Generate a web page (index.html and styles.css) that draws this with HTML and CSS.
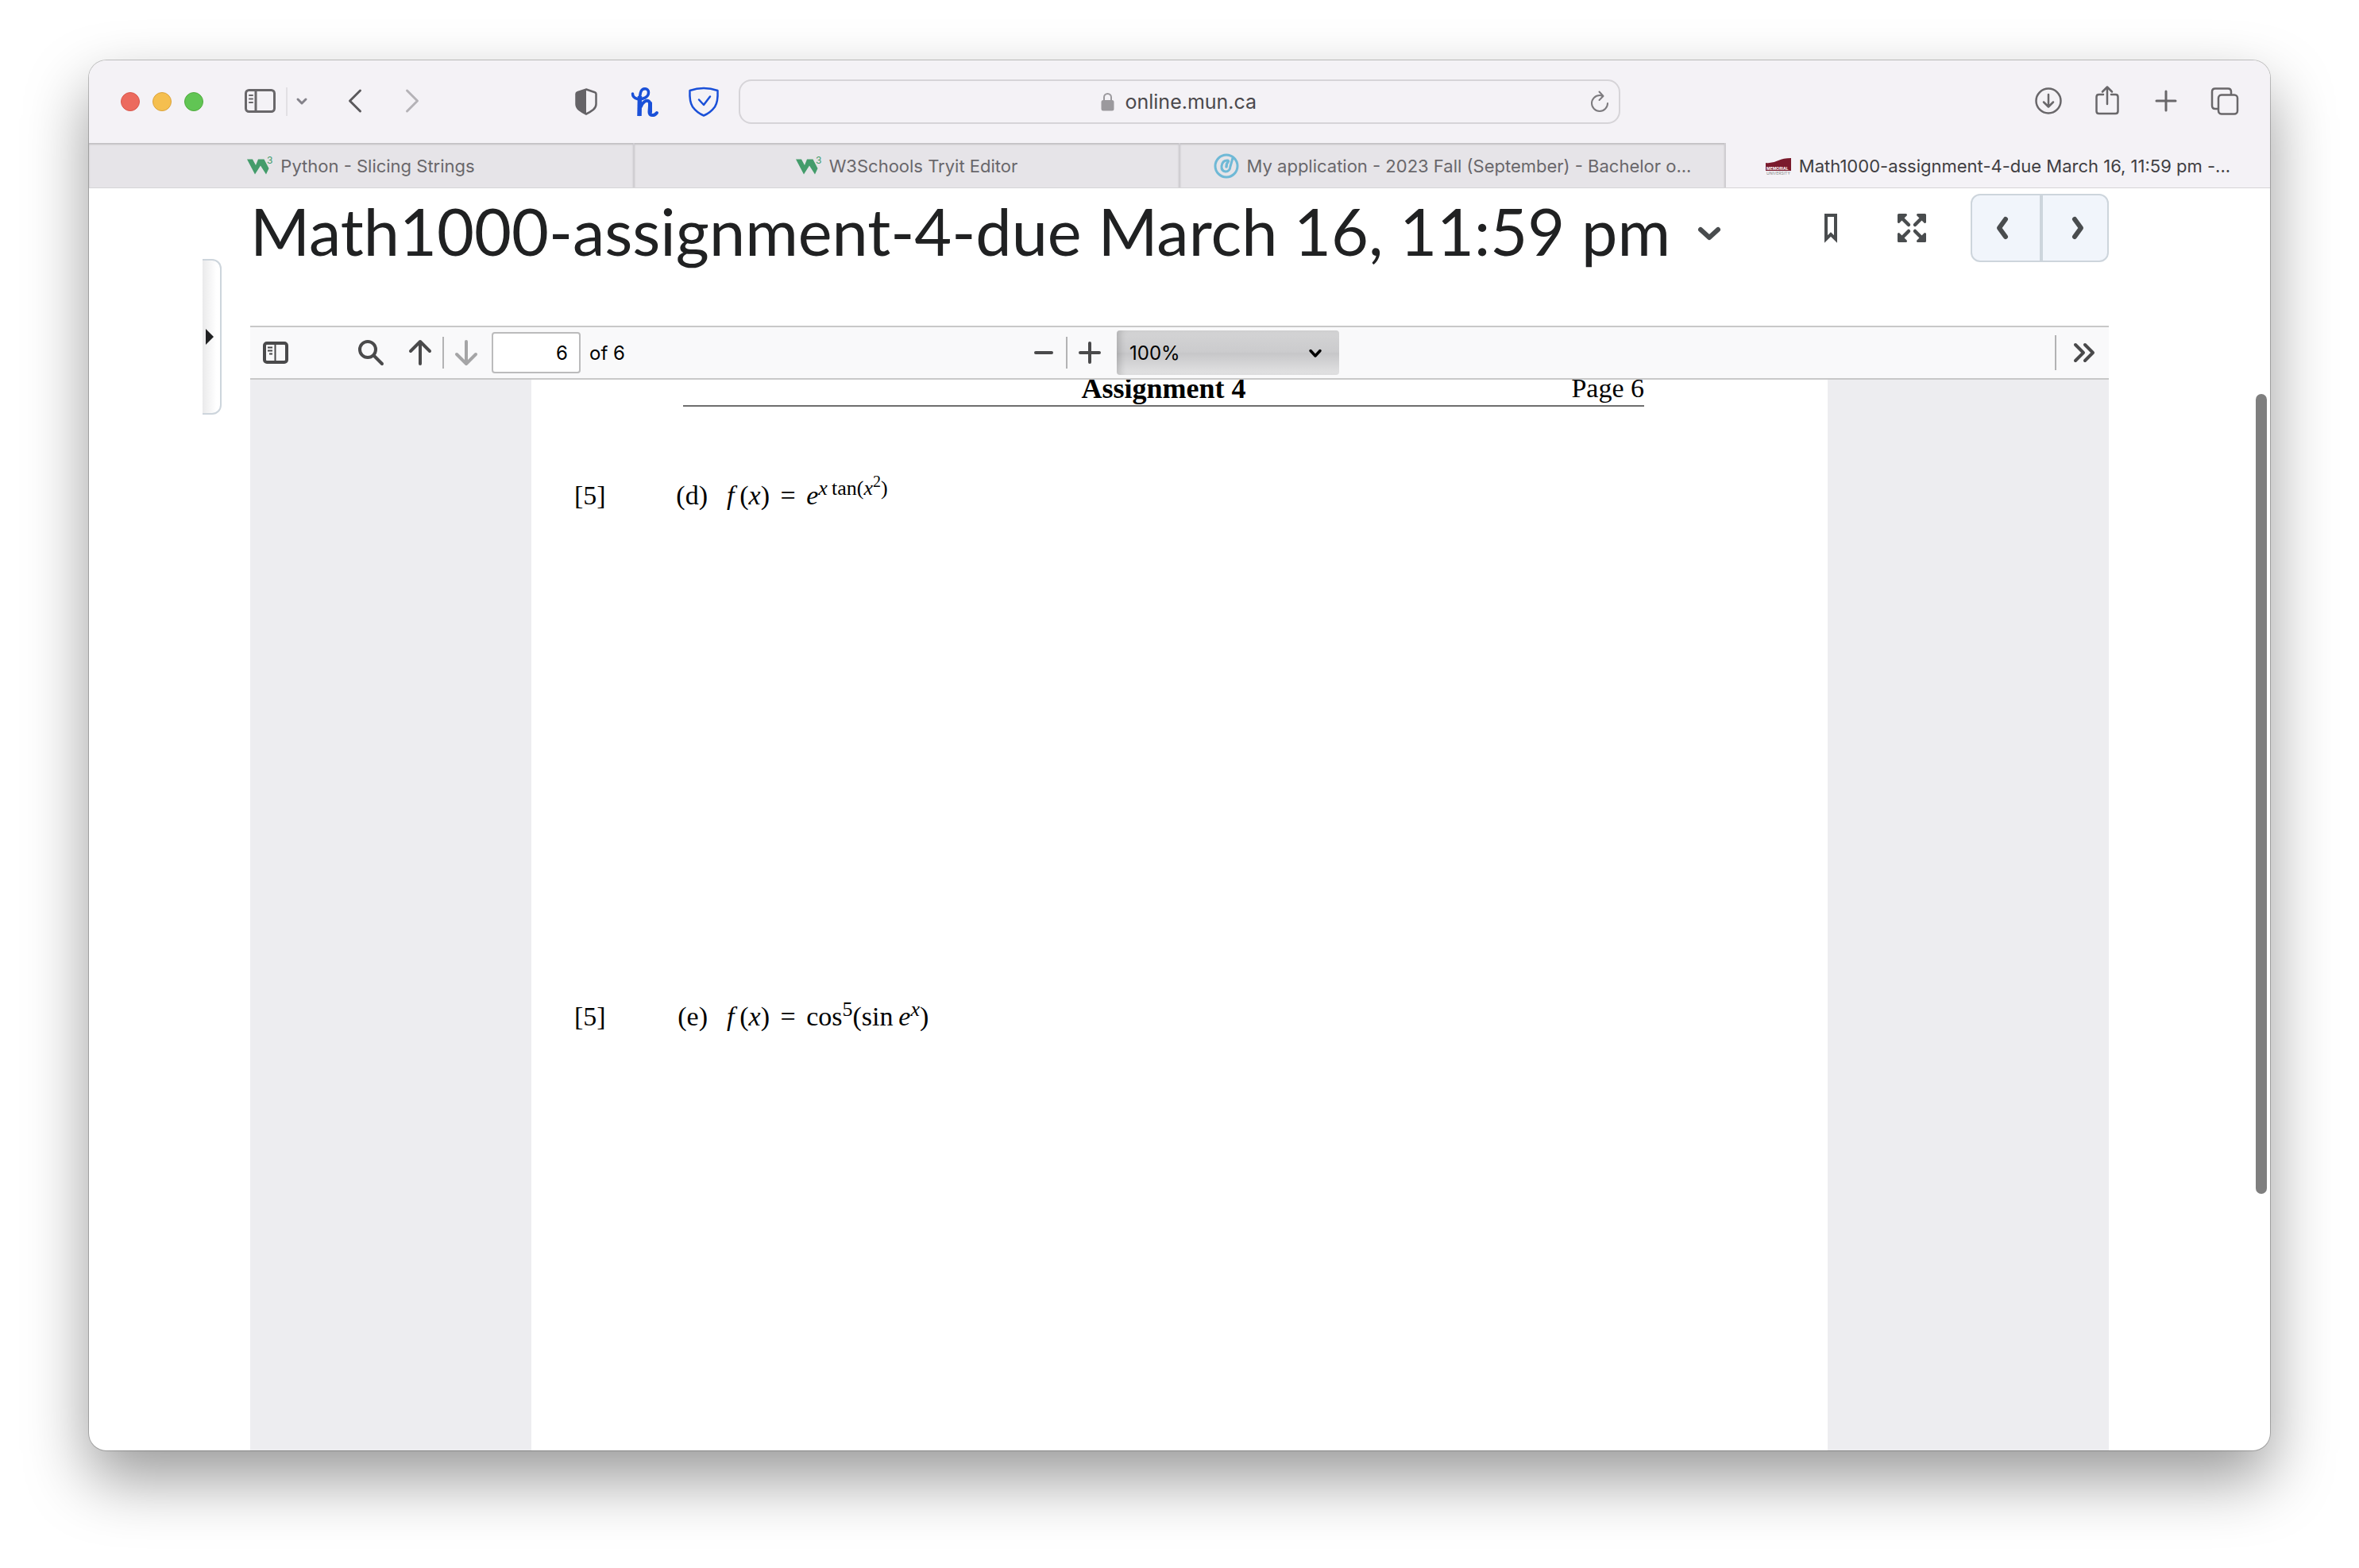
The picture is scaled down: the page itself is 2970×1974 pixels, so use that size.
FILE: index.html
```html
<!DOCTYPE html>
<html lang="en">
<head>
    <meta charset="UTF-8">
    <meta name="viewport" content="width=device-width, initial-scale=1.0">
    <title>Math1000-assignment-4-due March 16, 11:59 pm</title>
    <link rel="stylesheet" href="styles.css">
</head>
<body>
    <div class="window">
        <header class="toolbar">
            <div class="toolbar-left">
                <div class="lights">
                    <button class="light red" aria-label="Close"></button>
                    <button class="light yellow" aria-label="Minimize"></button>
                    <button class="light green" aria-label="Zoom"></button>
                </div>
                <button class="icon-btn sidebar-btn" aria-label="Sidebar">
                    <svg width="40" height="32" viewBox="0 0 40 32" fill="none" stroke="#69676a" stroke-width="3"><rect x="1.500" y="1.500" width="36" height="27" rx="4"/><path d="M14 1v28"/><path d="M6 8h4M6 12.500h4M6 17h4" stroke-width="2" stroke-linecap="round"/></svg>
                </button>
                <span class="toolbar-divider"></span>
                <button class="mini-btn" aria-label="Tab groups">
                    <svg width="16" height="12" viewBox="0 0 16 12" fill="none" stroke="#84828a" stroke-width="3" stroke-linecap="round" stroke-linejoin="round"><path d="M3 3l5 5 5-5"/></svg>
                </button>
                <div class="nav">
                    <button class="icon-btn" aria-label="Back">
                        <svg width="20" height="32" viewBox="0 0 20 32" fill="none" stroke="#5b595c" stroke-width="3" stroke-linecap="round" stroke-linejoin="round"><path d="M16.500 2L3.500 15l13 13"/></svg>
                    </button>
                    <button class="icon-btn" aria-label="Forward" disabled>
                        <svg width="20" height="32" viewBox="0 0 20 32" fill="none" stroke="#b5b3b7" stroke-width="3" stroke-linecap="round" stroke-linejoin="round"><path d="M3.500 2l13 13-13 13"/></svg>
                    </button>
                </div>
                <div class="extensions">
                    <button class="icon-btn" aria-label="Privacy report">
                        <svg width="28" height="34" viewBox="0 0 28 34"><path d="M14 1.500L25 5.200q1.500.5 1.500 2V20q0 4-3.500 7-4 3.200-9 5.500-5-2.300-9-5.500-3.500-3-3.500-7V7.200q0-1.500 1.500-2z" fill="none" stroke="#656367" stroke-width="2.500"/><path d="M14 1.500v31Q9 30.200 5 27q-3.500-3-3.500-7V7.200q0-1.500 1.500-2z" fill="#656367"/></svg>
                    </button>
                    <button class="icon-btn" aria-label="Honey">
                        <svg width="36" height="38" viewBox="0 0 36 38" fill="none" stroke="#1a50d8" stroke-linecap="round" stroke-linejoin="round"><path d="M2.500 9q0 5 6 6.500c7 1 14-2 14-8 0-6-8-6.500-10 0-.8 3-1.500 8-1.500 12v16" stroke-width="3.500"/><path d="M11.500 12L11 37" stroke-width="5.500" stroke-linecap="butt"/><path d="M13 25c2-5 6-8 9-7 3.500 1 1.500 9 1.500 14 0 5 6 5.500 9.500 1" stroke-width="4"/><path d="M24.500 21v11" stroke-width="5"/></svg>
                    </button>
                    <button class="icon-btn" aria-label="Link checker">
                        <svg width="38" height="38" viewBox="0 0 38 38" fill="none" stroke="#1a50d8" stroke-width="2.500" stroke-linecap="round" stroke-linejoin="round"><path d="M1.500 5Q19-1 36.500 5q.7 14-3.500 20.500Q27.500 33 19 36.500 10.500 33 5 25.500.8 19 1.500 5z"/><path d="M13 16.500l6 6.500 8-10.500"/></svg>
                    </button>
                </div>
            </div>
            <form class="address">
                <label class="address-main" for="url">
                    <svg width="17" height="24" viewBox="0 0 17 24"><path d="M4 12V6.500a4.500 4.500 0 0 1 9 0V12" fill="none" stroke="#9b999d" stroke-width="2"/><rect x="0.500" y="10" width="16" height="13.500" rx="2.500" fill="#9b999d"/></svg>
                    <input id="url" type="text" value="online.mun.ca" aria-label="Address">
                </label>
                <button class="reload" type="button" aria-label="Reload">
                    <svg width="24" height="28" viewBox="0 0 24 28" fill="none" stroke="#7c7a7e" stroke-width="2" stroke-linecap="round" stroke-linejoin="round"><path d="M15.500 7Q13.500 6 12 6a10 10 0 1 0 10 10"/><path d="M11.500 1.500L16.500 7l-5 5"/></svg>
                </button>
            </form>
            <div class="toolbar-right">
                <button class="icon-btn" aria-label="Downloads">
                    <svg width="34" height="34" viewBox="0 0 34 34" fill="none" stroke="#69676a" stroke-width="2.500" stroke-linecap="round" stroke-linejoin="round"><circle cx="17" cy="16" r="15.500"/><path d="M17 8v15M11 17.500l6 6 6-6"/></svg>
                </button>
                <button class="icon-btn" aria-label="Share">
                    <svg width="32" height="40" viewBox="0 0 32 40" fill="none" stroke="#69676a" stroke-width="2.500" stroke-linecap="round" stroke-linejoin="round"><path d="M11 11H5.500Q2.500 11 2.500 14v18q0 3 3 3h21q3 0 3-3V14q0-3-3-3H21"/><path d="M16 23V1.500M10 7.500l6-6 6 6"/></svg>
                </button>
                <button class="icon-btn" aria-label="New tab">
                    <svg width="28" height="28" viewBox="0 0 28 28" fill="none" stroke="#69676a" stroke-width="3" stroke-linecap="round"><path d="M14 1v24M2 13h24"/></svg>
                </button>
                <button class="icon-btn" aria-label="Tab overview">
                    <svg width="36" height="36" viewBox="0 0 36 36" fill="none" stroke="#69676a" stroke-width="2.500" stroke-linejoin="round"><rect x="10" y="9.500" width="24" height="24" rx="4"/><path d="M10 27H6q-4 0-4-4V5.500q0-4 4-4h16q4 0 4 4v4"/></svg>
                </button>
            </div>
        </header>

        <nav class="tabs" role="tablist">
            <button class="tab" role="tab">
                <svg width="32" height="24" viewBox="0 0 32 24"><path d="M0 3.500h7l4 7.500 3-7.500h7.500l6 11.500-3.500 7.500L17 11.500l-7 11z" fill="#449c6b"/><text class="w3" x="25" y="9">3</text></svg>
                <span>Python - Slicing Strings</span>
            </button>
            <button class="tab" role="tab">
                <svg width="32" height="24" viewBox="0 0 32 24"><path d="M0 3.500h7l4 7.500 3-7.500h7.500l6 11.500-3.500 7.500L17 11.500l-7 11z" fill="#449c6b"/><text class="w3" x="25" y="9">3</text></svg>
                <span>W3Schools Tryit Editor</span>
            </button>
            <button class="tab" role="tab">
                <svg width="32" height="32" viewBox="0 0 32 32" fill="none" stroke="#6fb9d6"><circle cx="16" cy="16" r="14" stroke-width="3"/><path d="M18 9q-7-.5-8 7-.5 6.500 5 7 5.500 0 6-6.500L24 6" stroke-width="3" stroke-linecap="round"/><path d="M18.500 10q-2.500 3-2.500 7" stroke-width="3.500" stroke-linecap="round"/></svg>
                <span>My application - 2023 Fall (September) - Bachelor o...</span>
            </button>
            <button class="tab active" role="tab" aria-selected="true">
                <svg width="32" height="22" viewBox="0 0 32 22"><path d="M0 7q8 1 16-3 6-3 16-3v16H0z" fill="#7a1a2c"/><text class="crest light-text" x="1" y="16">MEMORIAL</text><text class="crest" x="1" y="22">UNIVERSITY</text></svg>
                <span>Math1000-assignment-4-due March 16, 11:59 pm -...</span>
            </button>
        </nav>

        <main class="page">
            <button class="drawer-handle" aria-label="Open panel">
                <svg width="10" height="20" viewBox="0 0 10 20"><path d="M0 0l10 10L0 20z" fill="#202122"/></svg>
            </button>
            <section class="content">
                <div class="title-row">
                    <h1>Math1000-assignment-4-due March 16, 11:59 pm</h1>
                    <button class="title-menu" aria-label="Topic actions">
                        <svg width="30" height="18" viewBox="0 0 30 18" fill="none" stroke="#494c4e" stroke-width="6" stroke-linecap="round" stroke-linejoin="round"><path d="M4 4l11 10L26 4"/></svg>
                    </button>
                    <div class="actions">
                        <button class="icon-btn" aria-label="Bookmark">
                            <svg width="16" height="36" viewBox="0 0 16 36"><path d="M2 2h12v30l-6-6-6 6z" fill="none" stroke="#494c4e" stroke-width="4"/></svg>
                        </button>
                        <button class="icon-btn" aria-label="Full screen">
                            <svg width="36" height="36" viewBox="0 0 36 36" fill="#494c4e" stroke="#494c4e"><path d="M5 5l9 9M31 5l-9 9M5 31l9-9M31 31l-9-9" stroke-width="4.500" stroke-linecap="round"/><path d="M1.500 1.500h9l-9 9zM34.500 1.500h-9l9 9zM1.500 34.500h9l-9-9zM34.500 34.500h-9l9-9z" stroke-width="3" stroke-linejoin="round"/></svg>
                        </button>
                        <div class="pager">
                            <button class="prev" aria-label="Previous">
                                <svg width="18" height="30" viewBox="0 0 18 30" fill="none" stroke="#494c4e" stroke-width="6" stroke-linecap="round" stroke-linejoin="round"><path d="M13 4L5 15l8 11"/></svg>
                            </button>
                            <button class="next" aria-label="Next">
                                <svg width="18" height="30" viewBox="0 0 18 30" fill="none" stroke="#494c4e" stroke-width="6" stroke-linecap="round" stroke-linejoin="round"><path d="M5 4l8 11-8 11"/></svg>
                            </button>
                        </div>
                    </div>
                </div>

                <div class="pdf-bar">
                    <div class="pdf-left">
                        <button class="pdf-btn" aria-label="Toggle sidebar">
                            <svg width="32" height="28" viewBox="0 0 32 28" fill="none" stroke="#4a4a4b"><rect x="2" y="2" width="28" height="24" rx="3" stroke-width="4"/><path d="M15.500 3v22M6 7.500h6M6 11.500h6M8 15.500h4" stroke-width="2"/></svg>
                        </button>
                        <button class="pdf-btn find" aria-label="Find">
                            <svg width="32" height="32" viewBox="0 0 32 32" fill="none" stroke="#4a4a4b" stroke-width="4" stroke-linecap="round"><circle cx="12" cy="12" r="10"/><path d="M20 20l10 10"/></svg>
                        </button>
                        <button class="pdf-btn" aria-label="Previous page">
                            <svg width="28" height="32" viewBox="0 0 28 32" fill="none" stroke="#4a4a4b" stroke-width="4" stroke-linecap="round" stroke-linejoin="round"><path d="M14 30V2M2 14L14 2l12 12"/></svg>
                        </button>
                        <span class="pdf-divider"></span>
                        <button class="pdf-btn" aria-label="Next page" disabled>
                            <svg width="28" height="32" viewBox="0 0 28 32" fill="none" stroke="#a5a5a6" stroke-width="4" stroke-linecap="round" stroke-linejoin="round"><path d="M14 2v28M2 18l12 12 12-12"/></svg>
                        </button>
                        <input id="page-number" class="page-number" type="text" value="6">
                        <label for="page-number">of 6</label>
                    </div>
                    <div class="pdf-middle">
                        <button class="pdf-btn" aria-label="Zoom out">
                            <svg width="28" height="28" viewBox="0 0 28 28" fill="none" stroke="#4a4a4b" stroke-width="4" stroke-linecap="round"><path d="M4 14h20"/></svg>
                        </button>
                        <span class="pdf-divider"></span>
                        <button class="pdf-btn" aria-label="Zoom in">
                            <svg width="28" height="28" viewBox="0 0 28 28" fill="none" stroke="#4a4a4b" stroke-width="4" stroke-linecap="round"><path d="M2 14h24M14 2v24"/></svg>
                        </button>
                        <div class="zoom-box">
                            <select aria-label="Zoom">
                                <option>100%</option>
                            </select>
                            <svg width="18" height="12" viewBox="0 0 18 12" fill="none" stroke="#000" stroke-width="3.500" stroke-linecap="round" stroke-linejoin="round"><path d="M3 2.500L9 9l6-6.500"/></svg>
                        </div>
                    </div>
                    <div class="pdf-right">
                        <span class="pdf-divider tall"></span>
                        <button class="pdf-btn" aria-label="Tools">
                            <svg width="28" height="24" viewBox="0 0 28 24" fill="none" stroke="#4a4a4b" stroke-width="4" stroke-linecap="round" stroke-linejoin="round"><path d="M3 2l10 10L3 22M15 2l10 10-10 10"/></svg>
                        </button>
                    </div>
                </div>

                <div class="viewer">
                    <article class="sheet">
                        <div class="sheet-head">
                            <span></span>
                            <b>Assignment 4</b>
                            <span class="sheet-page">Page 6</span>
                        </div>
                        <div class="question">
                            <span>[5]</span>
                            <span class="part">(d)</span>
                            <span class="formula"><i>f</i>&thinsp;(<i>x</i>) <span class="eq">=</span> <i>e</i><sup><i>x</i>&thinsp;tan(<i>x</i><sup>2</sup>)</sup></span>
                        </div>
                        <div class="question">
                            <span>[5]</span>
                            <span class="part">(e)</span>
                            <span class="formula"><i>f</i>&thinsp;(<i>x</i>) <span class="eq">=</span> cos<sup>5</sup>(sin&thinsp;<i>e</i><sup><i>x</i></sup>)</span>
                        </div>
                    </article>
                </div>
            </section>
            <div class="scrollbar"></div>
        </main>
    </div>
</body>
</html>
```
FILE: styles.css
```css
* {
    box-sizing: border-box;
}

body {
    display: flex;
    min-height: 100vh;
    margin: 0;
    padding: 76px 112px 148px;
    background: #fff;
    font-family: Inter, "Liberation Sans", sans-serif;
    color: #202122;
}

button {
    display: flex;
    align-items: center;
    justify-content: center;
    padding: 0;
    border: none;
    background: none;
    font-family: inherit;
}

input, select {
    font-family: inherit;
}

svg {
    display: block;
    flex: none;
    overflow: visible;
}

.window {
    display: flex;
    flex-direction: column;
    flex: 1;
    min-width: 0;
    overflow: hidden;
    border-radius: 22px;
    background: #fff;
    box-shadow: 0 0 0 1px rgba(0, 0, 0, 0.22), 0 36px 80px rgba(0, 0, 0, 0.4);
}

/* browser toolbar */
.toolbar {
    display: grid;
    grid-template-columns: 1fr minmax(0, 1110px) 1fr;
    align-items: center;
    height: 104px;
    background: #f4f2f6;
}

.toolbar-left, .toolbar-right, .lights, .nav, .extensions {
    display: flex;
    align-items: center;
}

.toolbar-left {
    padding: 0 24px 0 40px;
}

.toolbar-right {
    justify-content: flex-end;
    gap: 34px;
    padding-right: 37px;
}

.lights {
    gap: 16px;
}

.light {
    width: 24px;
    height: 24px;
    border: 1px solid #d9574c;
    border-radius: 50%;
    background: #ec6a5e;
}

.yellow {
    border-color: #dba33d;
    background: #f5bf4f;
}

.green {
    border-color: #50ab3e;
    background: #61c554;
}

.icon-btn {
    width: 40px;
    height: 40px;
}

.sidebar-btn {
    margin-left: 52px;
}

.toolbar-divider {
    width: 2px;
    height: 36px;
    margin: 0 10px 0 12px;
    background: #e2e0e4;
}

.nav {
    gap: 32px;
    margin-left: 39px;
}

.extensions {
    gap: 34px;
    margin-left: auto;
}

.address {
    display: grid;
    grid-template-columns: 1fr auto 1fr;
    align-items: center;
    height: 56px;
    padding: 0 12px;
    border: 2px solid #d6d4d8;
    border-radius: 16px;
}

.address-main {
    display: flex;
    grid-column: 2;
    align-items: center;
    gap: 14px;
}

.address input {
    width: 168px;
    padding: 0;
    border: none;
    background: none;
    font-size: 25px;
    color: #4b494d;
}

.reload {
    justify-self: end;
}

/* tab strip */
.tabs {
    display: flex;
    height: 57px;
    border-bottom: 1px solid #d6d5d7;
    background: #f4f2f6;
}

.tab {
    flex: 1;
    gap: 10px;
    min-width: 0;
    padding-top: 2px;
    border-right: 2px solid #d0ced2;
    background: #e6e4e8;
    box-shadow: inset 0 2px 2px rgba(0, 0, 0, 0.16);
    font-size: 22px;
    color: #69676b;
    white-space: nowrap;
}

.tab.active {
    border-right: none;
    background: none;
    box-shadow: none;
    color: #403e42;
}

.w3 {
    font-size: 12px;
    fill: #449c6b;
}

.crest {
    font-size: 5px;
    fill: #8a8a8c;
}

.light-text {
    font-weight: 700;
    fill: #fff;
}

/* page body */
.page {
    position: relative;
    display: flex;
    flex: 1;
    gap: 36px;
    padding: 0 203px 0 143px;
}

.drawer-handle {
    width: 24px;
    height: 196px;
    margin-top: 89px;
    padding-right: 4px;
    border: 2px solid #cdd5dc;
    border-left: none;
    border-radius: 0 12px 12px 0;
    background: linear-gradient(to right, #eaeaeb, #fff 80%);
}

.content {
    display: flex;
    flex: 1;
    flex-direction: column;
    min-width: 0;
}

.title-row {
    display: flex;
    align-items: flex-start;
    height: 173px;
    padding-top: 6px;
}

h1 {
    margin: 0;
    font: 400 81px/96px Lato, sans-serif;
    white-space: nowrap;
}

.title-menu {
    width: 30px;
    height: 96px;
    margin-left: 34px;
    padding-top: 6px;
}

.actions {
    display: flex;
    align-items: center;
    gap: 46px;
    height: 88px;
    margin-left: auto;
}

.actions .icon-btn {
    width: 56px;
}

.pager {
    display: flex;
    height: 86px;
    border: 2px solid #cdd5dc;
    border-radius: 12px;
    background: #f1f5fb;
}

.pager button {
    width: 85px;
}

.pager .prev {
    padding-right: 10px;
}

.pager .next {
    padding-left: 6px;
    border-left: 4px solid #cdd5dc;
}

/* pdf toolbar */
.pdf-bar {
    display: grid;
    grid-template-columns: 1fr auto 1fr;
    align-items: center;
    height: 68px;
    border: solid #c8c8c8;
    border-width: 2px 0;
    background: #f9f9fa;
    font-size: 24px;
    color: #000;
}

.pdf-left, .pdf-middle, .pdf-right {
    display: flex;
    align-items: center;
}

.pdf-left {
    padding-left: 16px;
}

.pdf-middle {
    padding-left: 14px;
}

.pdf-right {
    justify-content: flex-end;
    gap: 7px;
    padding-right: 15px;
}

.pdf-btn {
    width: 32px;
    height: 56px;
}

.find {
    margin: 0 30px 0 88px;
}

.pdf-divider {
    width: 2px;
    height: 40px;
    margin: 0 12px;
    background: #b3b3b4;
}

.pdf-divider.tall {
    height: 44px;
}

.page-number {
    width: 112px;
    height: 52px;
    margin: 0 11px 0 16px;
    padding: 0 14px;
    border: 2px solid #bbbbbc;
    border-radius: 4px;
    font-size: 24px;
    text-align: right;
}

.zoom-box {
    position: relative;
    margin-left: 18px;
}

.zoom-box select {
    width: 280px;
    height: 56px;
    padding: 0 16px;
    appearance: none;
    border: none;
    border-radius: 4px;
    background: linear-gradient(#d4d4d5, #cbcbcd 50%, #c6c6c8 50%, #e3e3e4);
    box-shadow: inset 8px 0 8px -4px rgba(0, 0, 0, 0.16);
    font-size: 24px;
    color: #000;
}

.zoom-box svg {
    position: absolute;
    top: 23px;
    right: 21px;
    pointer-events: none;
}

/* pdf sheet */
.viewer {
    flex: 1;
    overflow: hidden;
    background: #ededf0;
    font: 34px/40px "Liberation Serif", serif;
    color: #000;
}

.sheet {
    display: flow-root;
    max-width: 1632px;
    height: 100%;
    margin: 0 auto;
    background: #fff;
}

/* the header is scrolled partly under the toolbar */
.sheet-head {
    display: grid;
    grid-template-columns: 1fr auto 1fr;
    margin: -9px 231px 92px 191px;
    padding-bottom: 1px;
    border-bottom: 2px solid #6e6e6e;
}

.sheet-head b {
    font-size: 36px;
}

.sheet-page {
    text-align: right;
}

.question {
    display: grid;
    grid-template-columns: 72px 96px 1fr;
    padding-left: 54px;
}

.question + .question {
    margin-top: 616px;
}

.part {
    text-align: right;
}

.formula {
    padding-left: 24px;
}

.eq {
    margin: 0 5px;
}

.formula sup {
    font-size: 26px;
    line-height: 0;
}

.formula sup sup {
    font-size: 20px;
}

/* overlay scrollbar */
.scrollbar {
    position: absolute;
    top: 259px;
    right: 4px;
    width: 14px;
    height: 63.4%;
    border-radius: 7px;
    background: #7f7f7f;
}
```
